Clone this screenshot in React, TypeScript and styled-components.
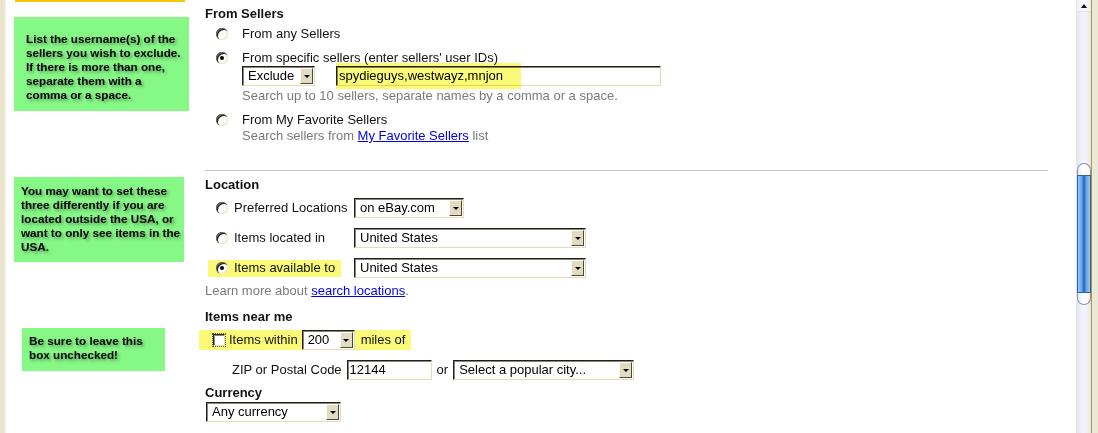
import React from 'react';
import styled, { createGlobalStyle } from 'styled-components';

const GlobalStyle = createGlobalStyle`
  html, body {
    margin: 0;
    padding: 0;
    background: #fff;
    overflow: hidden;
  }
  body {
    font-family: "Liberation Sans", Arial, sans-serif;
    font-size: 13px;
    color: #111;
  }
`;

const MARK = '#fafa78';

const Window = styled.div`
  display: flex;
  width: 1098px;
  height: 433px;
  overflow: hidden;
`;

const LeftFrame = styled.div`
  width: 5px;
  flex-shrink: 0;
  background: #ebe5cf;
  border-right: 1px solid #f6f3ea;
`;

const Page = styled.div`
  width: 1070px;
  flex-shrink: 0;
  display: grid;
  grid-template-columns: 199px 871px;
  align-content: start;
  background: #fff;
  overflow: hidden;
`;

const NoteCell = styled.div`
  display: flex;
  flex-direction: column;
  align-items: flex-start;
`;

const TopMark = styled.div`
  margin-left: 9px;
  width: 170px;
  height: 2px;
  background: #f4c600;
`;

const Note = styled.div<{ $top: number; $left: number; $width: number; $pad: string }>`
  margin-top: ${p => p.$top}px;
  margin-left: ${p => p.$left}px;
  width: ${p => p.$width}px;
  box-sizing: border-box;
  padding: ${p => p.$pad};
  background: #86f886;
  font-size: 11.7px;
  font-weight: bold;
  line-height: 14px;
  white-space: nowrap;
  color: #000;
  text-shadow: 2px 2px 3px rgba(0, 0, 0, 0.35);
`;

const Section = styled.section<{ $divider?: boolean; $pt: number; $pb: number }>`
  margin-right: 28px;
  padding: ${p => p.$pt}px 0 ${p => p.$pb}px;
  border-top: ${p => (p.$divider ? '1px solid #c8c8c8' : 'none')};
  display: flex;
  flex-direction: column;
  align-items: flex-start;
`;

const Title = styled.div<{ $mt?: number }>`
  margin-top: ${p => p.$mt ?? 0}px;
  font-weight: bold;
  line-height: 16px;
`;

const Option = styled.div<{ $mt: number }>`
  margin-top: ${p => p.$mt}px;
  padding-left: 11px;
  display: flex;
  align-items: center;
  gap: 14px;
  line-height: 16px;
`;

const Radio = styled.span<{ $checked?: boolean }>`
  width: 12px;
  height: 12px;
  flex-shrink: 0;
  border-radius: 50%;
  background: #fff;
  box-shadow: inset 1px 1px 0 #6e6a5e, inset 2px 2px 0 #262626, inset -1px -1px 0 #efe4bc;
  display: flex;
  align-items: center;
  justify-content: center;

  &::after {
    content: '';
    width: 4px;
    height: 4px;
    border-radius: 50%;
    background: ${p => (p.$checked ? '#000' : 'transparent')};
  }
`;

const Checkbox = styled.span`
  width: 12px;
  height: 12px;
  flex-shrink: 0;
  box-sizing: border-box;
  background: #fff;
  border-top: 1px solid #2a2a2a;
  border-left: 1px solid #2a2a2a;
  border-right: 1px solid #e4dab4;
  border-bottom: 1px solid #e4dab4;
  box-shadow: inset 1px 1px 0 #8a8676;
  outline: 1px dotted #555;
  outline-offset: 0;
`;

const Indented = styled.div<{ $mt?: number }>`
  margin-top: ${p => p.$mt ?? 0}px;
  padding-left: 37px;
  line-height: 16px;
`;

const Controls = styled.div`
  display: flex;
  align-items: center;
  gap: 21px;
`;

const Help = styled.div<{ $mt?: number; $pl?: number }>`
  margin-top: ${p => p.$mt ?? 0}px;
  padding-left: ${p => p.$pl ?? 0}px;
  color: #7a7a7a;
  line-height: 16px;
  white-space: nowrap;
`;

const Link = styled.a`
  color: #0000e6;
  text-decoration: underline;
`;

const Field = styled.div<{ $w: number }>`
  width: ${p => p.$w}px;
  height: 20px;
  flex-shrink: 0;
  box-sizing: border-box;
  background: #fff;
  border-top: 1px solid #1e1e1e;
  border-left: 1px solid #1e1e1e;
  border-right: 1px solid #e6dbb2;
  border-bottom: 1px solid #e6dbb2;
  box-shadow: inset 1px 1px 0 #8a8676;
  display: flex;
  align-items: center;
  font-size: 13px;
  line-height: 16px;
  color: #000;
  white-space: nowrap;
`;

const SelectField = styled(Field)`
  padding-left: 5px;
`;

const InputField = styled(Field)`
  padding-left: 2px;
`;

const DropButton = styled.span`
  margin-left: auto;
  margin-right: 1px;
  width: 13px;
  height: 16px;
  flex-shrink: 0;
  box-sizing: border-box;
  background: #e2dbc0;
  border-top: 1px solid #fffdf4;
  border-left: 1px solid #fffdf4;
  border-right: 1px solid #4a4838;
  border-bottom: 1px solid #4a4838;
  display: flex;
  align-items: center;
  justify-content: center;

  &::after {
    content: '';
    border-left: 3px solid transparent;
    border-right: 3px solid transparent;
    border-top: 3px solid #000;
  }
`;

const MarkedInput = styled.div`
  position: relative;
`;

const Marker = styled.span<{ $w: number }>`
  position: absolute;
  left: 0;
  top: -3px;
  width: ${p => p.$w}px;
  height: 26px;
  background: ${MARK};
  mix-blend-mode: multiply;
  pointer-events: none;
`;

const LocRow = styled.div<{ $mt: number }>`
  margin-top: ${p => p.$mt}px;
  display: grid;
  grid-template-columns: 149px auto;
  align-items: center;
`;

const LocLabel = styled.div<{ $mark?: boolean }>`
  margin-left: 3px;
  width: 133px;
  height: 17px;
  box-sizing: border-box;
  padding-left: 8px;
  display: flex;
  align-items: center;
  gap: 6px;
  white-space: nowrap;
  line-height: 16px;
  background: ${p => (p.$mark ? MARK : 'transparent')};
`;

const NearRow = styled.div`
  margin-top: 5px;
  margin-left: -6px;
  height: 20px;
  padding: 0 6px 0 14px;
  display: flex;
  align-items: center;
  gap: 4px;
  background: ${MARK};
  line-height: 16px;
  white-space: nowrap;
`;

const Miles = styled.span`
  margin-left: 2px;
`;

const ZipRow = styled.div`
  margin-top: 10px;
  padding-left: 27px;
  display: flex;
  align-items: center;
  gap: 5px;
  line-height: 16px;
  white-space: nowrap;
`;

const Spaced = styled.div`
  margin-top: 1px;
  margin-left: 1px;
`;

const Scrollbar = styled.div`
  width: 14px;
  flex-shrink: 0;
  border-left: 1px solid #e3e6ee;
  display: flex;
  flex-direction: column;
  background: linear-gradient(to right, #e4e7f0, #f4f5fa 40%, #f1f2f8 70%, #e3e6ef);
`;

const UpButton = styled.div`
  height: 12px;
  display: flex;
  align-items: center;
  justify-content: center;
  background: linear-gradient(to right, #eef0f7, #fbfbfe 50%, #eceef6);
  border-bottom: 1px solid #e0e3ec;
  box-sizing: border-box;

  &::after {
    content: '';
    border-left: 3px solid transparent;
    border-right: 3px solid transparent;
    border-bottom: 4px solid #111;
  }
`;

const Thumb = styled.div<{ $offset: number }>`
  margin-top: ${p => p.$offset}px;
  display: flex;
  flex-direction: column;
`;

const ThumbCap = styled.div<{ $end: 'top' | 'bottom' }>`
  height: 12px;
  box-sizing: border-box;
  border: 1px solid #8594b4;
  ${p => (p.$end === 'top' ? 'border-bottom: none;' : 'border-top: none;')}
  border-radius: ${p => (p.$end === 'top' ? '7px 7px 0 0' : '0 0 7px 7px')};
  background: linear-gradient(to right, #e8ecf4, #ffffff 45%, #f2f4f9);
`;

const ThumbBody = styled.div<{ $h: number }>`
  height: ${p => p.$h}px;
  border: 1px solid #2f5fa8;
  box-sizing: border-box;
  background: linear-gradient(
    to right,
    #9ccbf3 0,
    #62a8e8 30%,
    #2f70c4 46%,
    #2f70c4 54%,
    #62a8e8 70%,
    #94c6f1 100%
  );
`;

const RightFrame = styled.div`
  width: 6px;
  flex-shrink: 0;
  border-left: 1px solid #c0922e;
  background: #ece8d6;
`;

interface SelectProps {
  width: number;
  value: string;
}

const Select = ({ width, value }: SelectProps) => (
  <SelectField $w={width}>
    {value}
    <DropButton />
  </SelectField>
);

const App = () => {
  return (
    <>
      <GlobalStyle />
      <Window>
        <LeftFrame />
        <Page>
          {/* sellers */}
          <NoteCell>
            <TopMark />
            <Note $top={15} $left={8} $width={175} $pad="15px 0 9px 12px">
              List the username(s) of the
              <br />
              sellers you wish to exclude.
              <br />
              If there is more than one,
              <br />
              separate them with a
              <br />
              comma or a space.
            </Note>
          </NoteCell>
          <Section $pt={6} $pb={26}>
            <Title>From Sellers</Title>
            <Option $mt={4}>
              <Radio />
              From any Sellers
            </Option>
            <Option $mt={8}>
              <Radio $checked />
              From specific sellers (enter sellers' user IDs)
            </Option>
            <Indented>
              <Controls>
                <Select width={73} value="Exclude" />
                <MarkedInput>
                  <InputField $w={325}>spydieguys,westwayz,mnjon</InputField>
                  <Marker $w={185} />
                </MarkedInput>
              </Controls>
            </Indented>
            <Indented $mt={2}>
              <Help>Search up to 10 sellers, separate names by a comma or a space.</Help>
            </Indented>
            <Option $mt={8}>
              <Radio />
              From My Favorite Sellers
            </Option>
            <Indented>
              <Help>
                Search sellers from <Link href="#">My Favorite Sellers</Link> list
              </Help>
            </Indented>
          </Section>

          {/* location */}
          <NoteCell>
            <Note $top={7} $left={8} $width={170} $pad="7px 0 8px 7px">
              You may want to set these
              <br />
              three differently if you are
              <br />
              located outside the USA, or
              <br />
              want to only see items in the
              <br />
              USA.
            </Note>
          </NoteCell>
          <Section $divider $pt={6} $pb={2}>
            <Title>Location</Title>
            <LocRow $mt={5}>
              <LocLabel>
                <Radio />
                Preferred Locations
              </LocLabel>
              <Select width={110} value="on eBay.com" />
            </LocRow>
            <LocRow $mt={10}>
              <LocLabel>
                <Radio />
                Items located in
              </LocLabel>
              <Select width={232} value="United States" />
            </LocRow>
            <LocRow $mt={10}>
              <LocLabel $mark>
                <Radio $checked />
                Items available to
              </LocLabel>
              <Select width={232} value="United States" />
            </LocRow>
            <Help $mt={5}>
              Learn more about <Link href="#">search locations</Link>.
            </Help>
          </Section>

          {/* near me */}
          <NoteCell>
            <Note $top={27} $left={16} $width={143} $pad="6px 0 9px 7px">
              Be sure to leave this
              <br />
              box unchecked!
            </Note>
          </NoteCell>
          <Section $pt={8} $pb={0}>
            <Title>Items near me</Title>
            <NearRow>
              <Checkbox />
              Items within
              <Select width={53} value="200" />
              <Miles>miles of</Miles>
            </NearRow>
            <ZipRow>
              ZIP or Postal Code
              <InputField $w={85}>12144</InputField>
              or
              <Select width={181} value="Select a popular city..." />
            </ZipRow>
            <Title $mt={5}>Currency</Title>
            <Spaced>
              <Select width={135} value="Any currency" />
            </Spaced>
          </Section>
        </Page>
        <Scrollbar>
          <UpButton />
          <Thumb $offset={151}>
            <ThumbCap $end="top" />
            <ThumbBody $h={118} />
            <ThumbCap $end="bottom" />
          </Thumb>
        </Scrollbar>
        <RightFrame />
      </Window>
    </>
  );
};

export default App;
